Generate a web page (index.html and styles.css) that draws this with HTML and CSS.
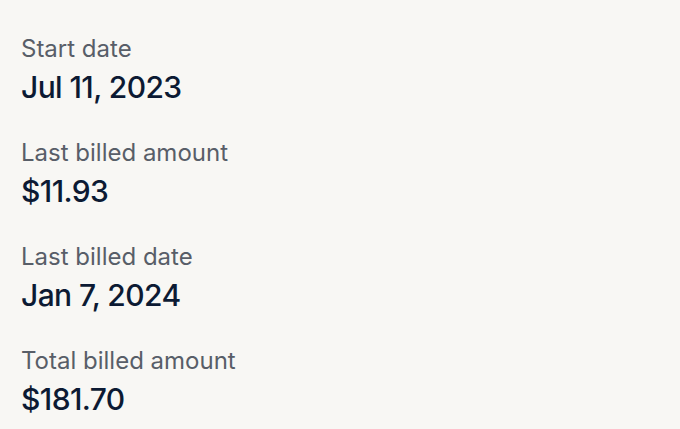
FILE: index.html
```html
<!DOCTYPE html>
<html>
<head>
<meta charset="utf-8">
<link rel="stylesheet" href="styles.css">
</head>
<body>
<div class="details">
  <div class="item">
    <div class="label">Start date</div>
    <div class="value">Jul 11, 2023</div>
  </div>
  <div class="item">
    <div class="label">Last billed amount</div>
    <div class="value">$11.93</div>
  </div>
  <div class="item">
    <div class="label">Last billed date</div>
    <div class="value">Jan 7, 2024</div>
  </div>
  <div class="item">
    <div class="label">Total billed amount</div>
    <div class="value">$181.70</div>
  </div>
</div>
</body>
</html>
```
FILE: styles.css
```css
html, body {
  margin: 0;
  padding: 0;
  background: #f8f7f4;
  height: 100%;
  overflow: hidden;
}
body {
  font-family: Inter, "Noto Sans", sans-serif;
}
.details {
  display: flex;
  flex-direction: column;
  gap: 32px;
  padding: 33px 21px 0 21px;
}
.item {
  display: flex;
  flex-direction: column;
  gap: 4px;
}
.label {
  font-size: 24px;
  line-height: 32px;
  color: #585e68;
}
.value {
  font-size: 30px;
  line-height: 36px;
  font-weight: 500;
  letter-spacing: -0.6px;
  color: #0c1a33;
}
```
